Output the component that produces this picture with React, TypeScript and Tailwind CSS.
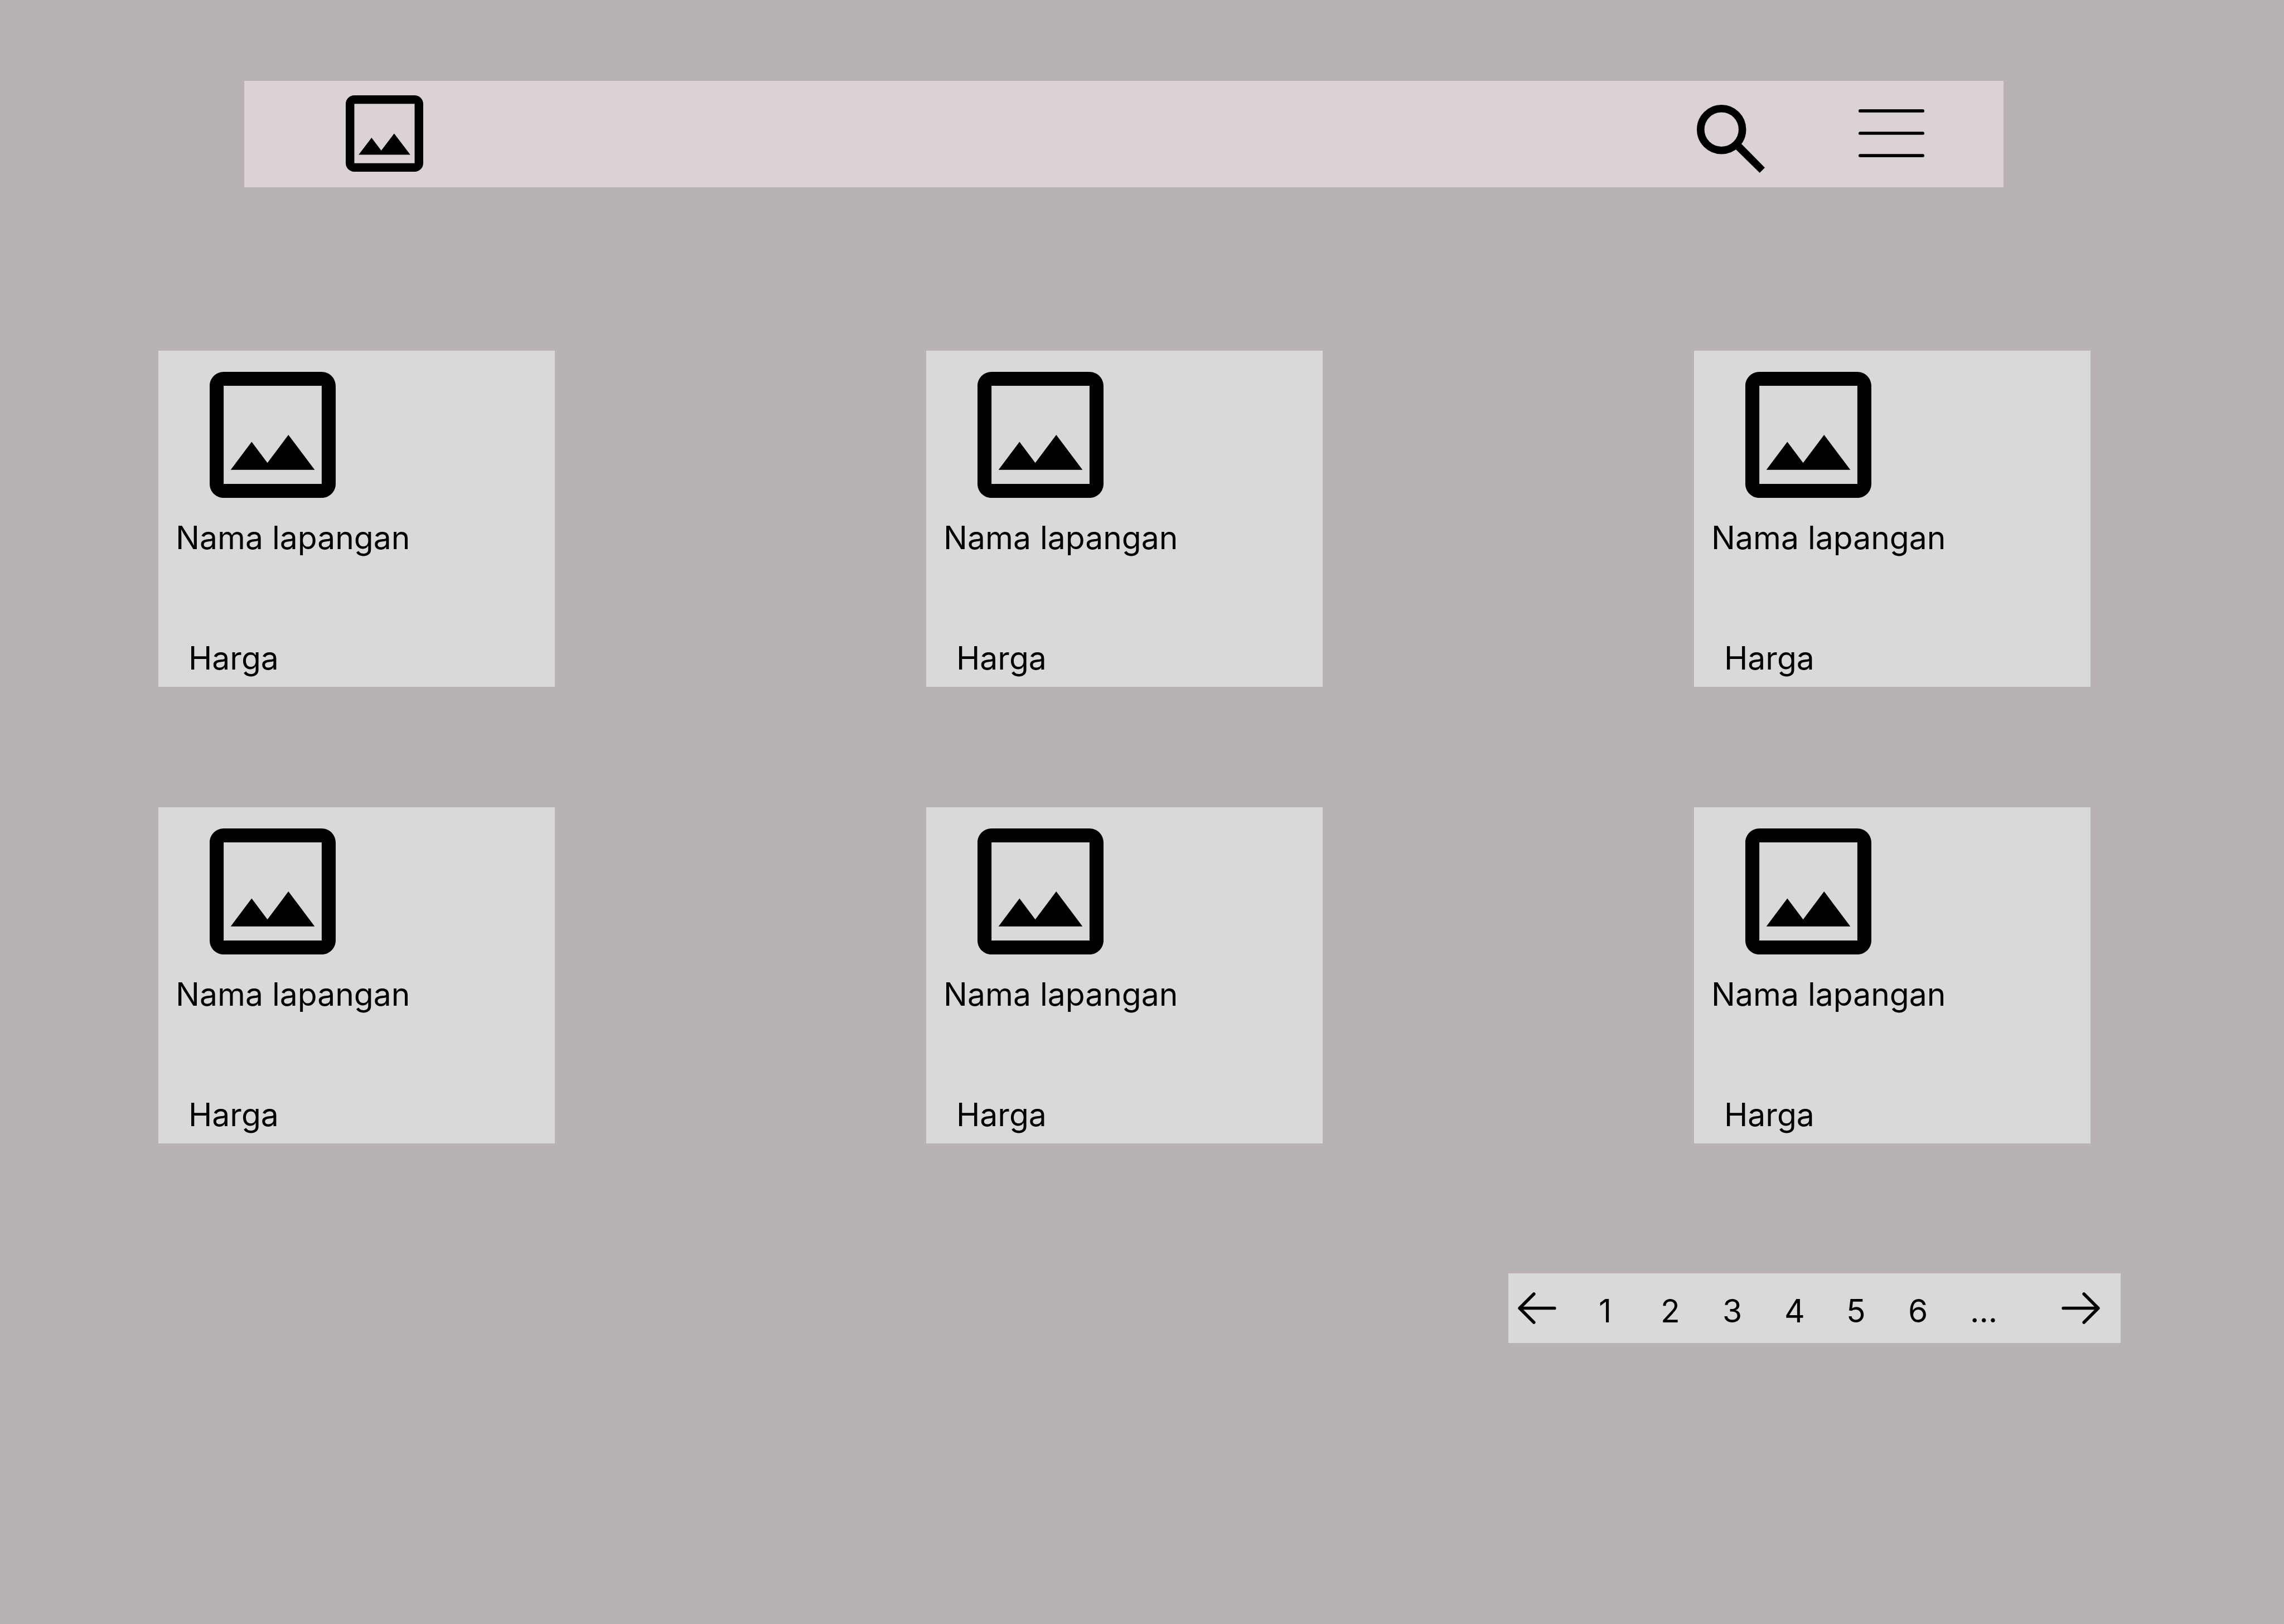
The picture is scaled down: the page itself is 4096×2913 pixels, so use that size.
const fields = [1, 2, 3, 4, 5, 6];
const pages = ["1", "2", "3", "4", "5", "6"];

function PictureIcon({ className }: { className: string }) {
  return (
    <svg viewBox="3 3 18 18" preserveAspectRatio="none" className={className} fill="currentColor" aria-hidden="true">
      <path d="M19 5v14H5V5h14m0-2H5c-1.1 0-2 .9-2 2v14c0 1.1.9 2 2 2h14c1.1 0 2-.9 2-2V5c0-1.1-.9-2-2-2z" />
      <path d="M14.25 12l-3 4L9 13l-3 4h12l-3.75-5z" />
    </svg>
  );
}

function SearchIcon() {
  return (
    <svg viewBox="0 0 171 171" className="size-full" aria-hidden="true">
      <circle cx="62" cy="62" r="52.5" fill="none" stroke="currentColor" strokeWidth="19" />
      <path d="M112 98 171 158 158 171 98 112z" fill="currentColor" />
    </svg>
  );
}

function MenuIcon() {
  return (
    <svg viewBox="0 0 165 120" className="size-full" stroke="currentColor" strokeWidth="8" strokeLinecap="round" aria-hidden="true">
      <path d="M4 4H161M4 60H161M4 116H161" />
    </svg>
  );
}

function ArrowIcon({ d }: { d: string }) {
  return (
    <svg
      viewBox="0 0 256 256"
      className="size-full"
      fill="none"
      stroke="currentColor"
      strokeWidth="16"
      strokeLinecap="round"
      strokeLinejoin="round"
      aria-hidden="true"
    >
      <path d={d} />
    </svg>
  );
}

function FieldCard() {
  return (
    <article className="flex w-[711px] flex-col items-start bg-[#d9d9d9] pt-[38px] pb-[17px]">
      <PictureIcon className="ml-[92px] size-[226px]" />
      <h2 className="mt-[37px] ml-[31px]">Nama lapangan</h2>
      <p className="mt-[147px] ml-[54px]">Harga</p>
    </article>
  );
}

export default function App() {
  return (
    <div className="flex min-h-screen flex-col bg-[#b8b3b2] pt-[145px] font-['Inter',sans-serif] text-[57px] leading-[69px] font-normal text-black">
      <header className="mr-[503px] ml-[438px] flex items-start bg-[#dbd2d3] pt-[26px] pr-[142px] pb-[26px] pl-[182px]">
        <a href="#" aria-label="Beranda" className="block">
          <PictureIcon className="h-[137px] w-[139px]" />
        </a>
        <button type="button" aria-label="Cari" className="mt-[17px] ml-auto size-[122px]">
          <SearchIcon />
        </button>
        <button type="button" aria-label="Menu" className="mt-[25px] ml-[168px] h-[86px] w-[118px]">
          <MenuIcon />
        </button>
      </header>

      <main className="mt-[293px] mr-[347px] ml-[284px] grid grid-cols-[repeat(3,max-content)] justify-between gap-y-[216px]">
        {fields.map((id) => (
          <FieldCard key={id} />
        ))}
      </main>

      <nav aria-label="Halaman" className="mt-[233px] mr-[293px] flex h-[125px] items-center self-end bg-[#d9d9d9] pr-[26px] pl-1.5">
        <button type="button" aria-label="Sebelumnya" className="size-[91px]">
          <ArrowIcon d="M216 128H40M112 56L40 128l72 72" />
        </button>
        <div className="ml-[65px] flex pt-2.5">
          {pages.map((page) => (
            <button key={page} type="button" className="w-[111px] text-left">
              {page}
            </button>
          ))}
          <span className="w-[111px]">...</span>
        </div>
        <button type="button" aria-label="Berikutnya" className="ml-[42px] size-[91px]">
          <ArrowIcon d="M40 128h176M144 56l72 72-72 72" />
        </button>
      </nav>
    </div>
  );
}
